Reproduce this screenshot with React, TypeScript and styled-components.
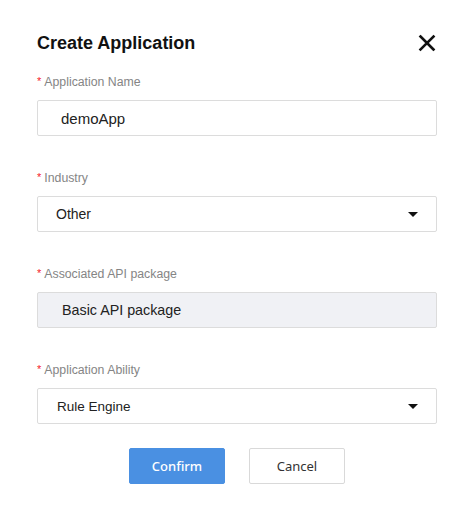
import React from "react";
import styled, { createGlobalStyle } from "styled-components";

const GlobalStyle = createGlobalStyle`
  html, body { margin: 0; padding: 0; background: #fff; }
  body { font-family: "Liberation Sans", Arial, sans-serif; }
  * { box-sizing: border-box; }
`;

const Dialog = styled.div`
  width: 474px;
  height: 518px;
  padding: 31px 37px 34px 37px;
  display: flex;
  flex-direction: column;
  background: #fff;
`;

const Header = styled.div`
  display: flex;
  align-items: center;
  justify-content: space-between;
  height: 24px;
  margin-bottom: 19px;
`;

const Title = styled.h1`
  margin: 0;
  font-family: "Liberation Sans", Arial, sans-serif;
  font-size: 18px;
  font-weight: 700;
  line-height: 24px;
  color: #111;
`;

const CloseButton = styled.button`
  border: none;
  background: none;
  padding: 0;
  width: 18px;
  height: 18px;
  margin-right: 1px;
  display: flex;
  align-items: center;
  justify-content: center;
  cursor: pointer;
`;

const Fields = styled.div`
  display: flex;
  flex-direction: column;
  gap: 34px;
  margin-bottom: 24px;
`;

const Field = styled.div`
  display: flex;
  flex-direction: column;
`;

const Label = styled.label`
  font-family: "Liberation Sans", Arial, sans-serif;
  font-size: 12.3px;
  line-height: 16px;
  color: #858585;
  margin-bottom: 10px;
  display: flex;
  align-items: center;
`;

const Star = styled.span`
  color: #f5222d;
  font-size: 11px;
  margin-right: 3px;
  position: relative;
  top: -1px;
`;

const Box = styled.div<{ $disabled?: boolean; $pad: number }>`
  height: 36px;
  border: 1px solid #dcdcdc;
  border-radius: 2px;
  background: ${(p) => (p.$disabled ? "#f0f1f5" : "#fff")};
  display: flex;
  align-items: center;
  justify-content: space-between;
  padding: 0 18px 0 ${(p) => p.$pad}px;
  font-family: "Liberation Sans", Arial, sans-serif;
  color: #222;
`;

const Value = styled.span<{ $size: number }>`
  font-size: ${(p) => p.$size}px;
`;

const Caret = styled.span`
  width: 0;
  height: 0;
  border-left: 5px solid transparent;
  border-right: 5px solid transparent;
  border-top: 5px solid #111;
`;

const Actions = styled.div`
  display: flex;
  justify-content: center;
  gap: 24px;
`;

const Button = styled.button<{ $primary?: boolean }>`
  width: 96px;
  height: 36px;
  border-radius: 2px;
  font-family: "Noto Sans", "Open Sans", sans-serif;
  font-size: 13px;
  font-weight: ${(p) => (p.$primary ? 500 : 400)};
  border: 1px solid ${(p) => (p.$primary ? "#4a90e2" : "#d9d9d9")};
  background: ${(p) => (p.$primary ? "#4a90e2" : "#fff")};
  color: ${(p) => (p.$primary ? "#fff" : "#333")};
  cursor: pointer;
`;

const CloseIcon = () => (
  <svg width="18" height="18" viewBox="0 0 18 18">
    <path d="M2.5 2.5 L15.5 15.5 M15.5 2.5 L2.5 15.5" stroke="#111" strokeWidth="2.6" strokeLinecap="square" />
  </svg>
);

export default function App() {
  return (
    <>
      <GlobalStyle />
      <Dialog>
        <Header>
          <Title>Create Application</Title>
          <CloseButton aria-label="Close">
            <CloseIcon />
          </CloseButton>
        </Header>

        <Fields>
          <Field>
            <Label><Star>*</Star>Application Name</Label>
            <Box $pad={23}>
              <Value $size={15}>demoApp</Value>
            </Box>
          </Field>

          <Field>
            <Label><Star>*</Star>Industry</Label>
            <Box $pad={18}>
              <Value $size={14}>Other</Value>
              <Caret />
            </Box>
          </Field>

          <Field>
            <Label><Star>*</Star>Associated API package</Label>
            <Box $pad={24} $disabled>
              <Value $size={14.3}>Basic API package</Value>
            </Box>
          </Field>

          <Field>
            <Label><Star>*</Star>Application Ability</Label>
            <Box $pad={19}>
              <Value $size={13.5}>Rule Engine</Value>
              <Caret />
            </Box>
          </Field>
        </Fields>

        <Actions>
          <Button $primary>Confirm</Button>
          <Button>Cancel</Button>
        </Actions>
      </Dialog>
    </>
  );
}
